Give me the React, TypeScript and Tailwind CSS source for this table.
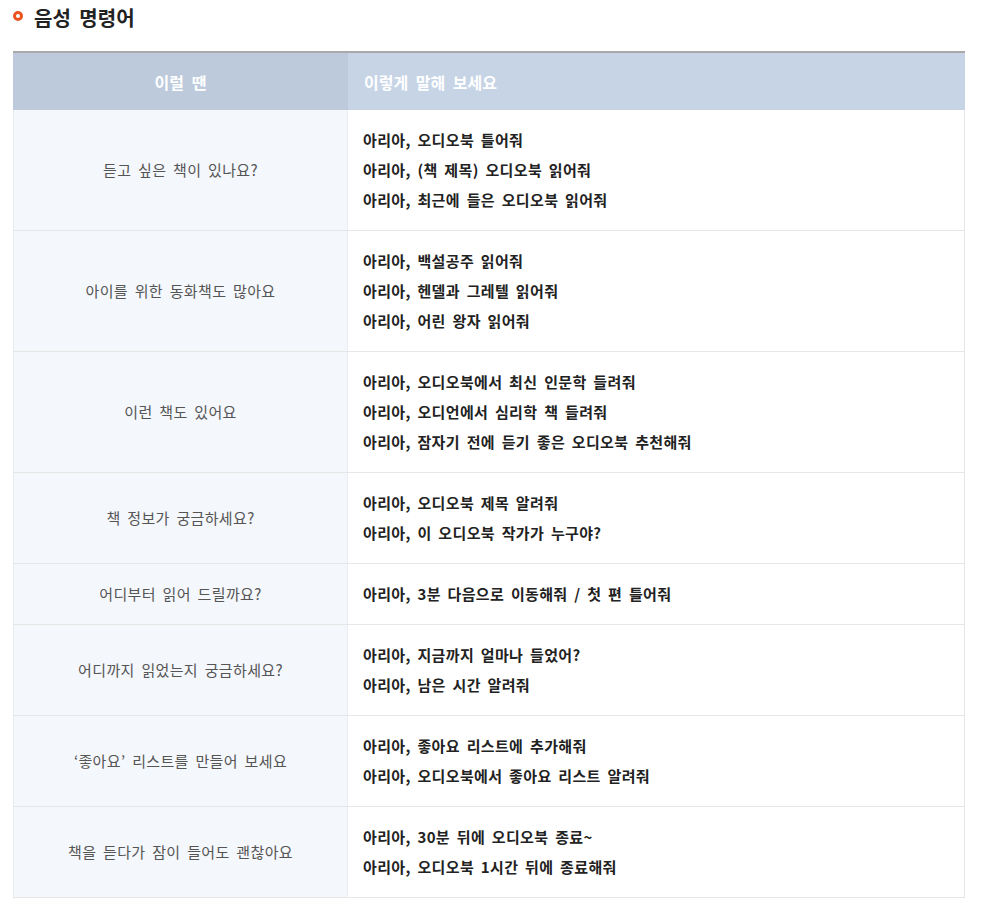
import React from "react";

const rows: { q: string; a: string[] }[] = [
  {
    q: "듣고 싶은 책이 있나요?",
    a: [
      "아리아, 오디오북 틀어줘",
      "아리아, (책 제목) 오디오북 읽어줘",
      "아리아, 최근에 들은 오디오북 읽어줘",
    ],
  },
  {
    q: "아이를 위한 동화책도 많아요",
    a: ["아리아, 백설공주 읽어줘", "아리아, 헨델과 그레텔 읽어줘", "아리아, 어린 왕자 읽어줘"],
  },
  {
    q: "이런 책도 있어요",
    a: [
      "아리아, 오디오북에서 최신 인문학 들려줘",
      "아리아, 오디언에서 심리학 책 들려줘",
      "아리아, 잠자기 전에 듣기 좋은 오디오북 추천해줘",
    ],
  },
  {
    q: "책 정보가 궁금하세요?",
    a: ["아리아, 오디오북 제목 알려줘", "아리아, 이 오디오북 작가가 누구야?"],
  },
  {
    q: "어디부터 읽어 드릴까요?",
    a: ["아리아, 3분 다음으로 이동해줘 / 첫 편 틀어줘"],
  },
  {
    q: "어디까지 읽었는지 궁금하세요?",
    a: ["아리아, 지금까지 얼마나 들었어?", "아리아, 남은 시간 알려줘"],
  },
  {
    q: "‘좋아요’ 리스트를 만들어 보세요",
    a: ["아리아, 좋아요 리스트에 추가해줘", "아리아, 오디오북에서 좋아요 리스트 알려줘"],
  },
  {
    q: "책을 듣다가 잠이 들어도 괜찮아요",
    a: ["아리아, 30분 뒤에 오디오북 종료~", "아리아, 오디오북 1시간 뒤에 종료해줘"],
  },
];

export default function App() {
  return (
    <div
      className="bg-white w-[986px] min-h-[911px]"
      style={{ fontFamily: '"Noto Sans CJK KR", "Noto Sans", sans-serif' }}
    >
      <div className="flex items-center h-[37px] pl-[13px]">
        <span className="block w-[10px] h-[10px] rounded-full border-[3px] border-[#ea5420] mt-[-5px]" />
        <h2 className="ml-[11px] text-[20px] font-bold text-[#222] leading-[26px] mt-[-1px] [word-spacing:4px]">
          음성 명령어
        </h2>
      </div>
      <div className="ml-[13px] w-[952px] mt-[14px] border-t-2 border-[#a9a9a9]">
        <div className="flex h-[57px] text-white text-[16px] font-bold [word-spacing:4px]">
          <div className="w-[335px] bg-[#bccadc] flex items-center justify-center">이럴 땐</div>
          <div className="flex-1 bg-[#c6d4e6] flex items-center pl-[16px]">이렇게 말해 보세요</div>
        </div>
        {rows.map((r, i) => (
          <div key={i} className="flex border-b border-[#e6e6e6]">
            <div className="w-[335px] bg-[#f4f7fc] border-l border-r border-[#e9ecf1] flex items-center justify-center text-[15px] text-[#555] tracking-[0.35px] [word-spacing:3px]">
              {r.q}
            </div>
            <div className="flex-1 py-[15px] pl-[15px] border-r border-[#e6e6e6] text-[15px] font-bold text-[#222] leading-[30px] tracking-[0.35px] [word-spacing:3px]">
              {r.a.map((t, j) => (
                <div key={j}>{t}</div>
              ))}
            </div>
          </div>
        ))}
      </div>
    </div>
  );
}
